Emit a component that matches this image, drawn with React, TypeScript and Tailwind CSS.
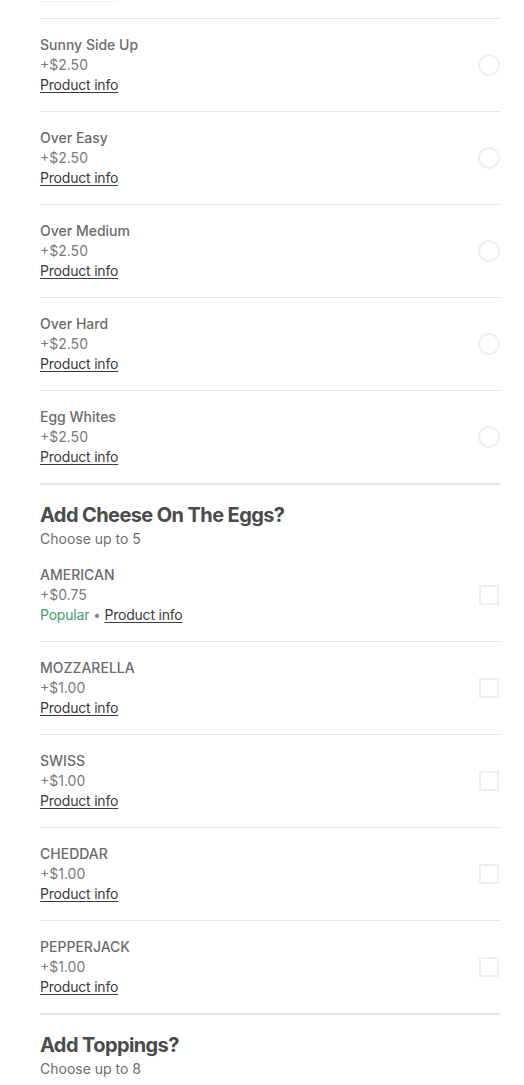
type Option = {
  name: string;
  price: string;
  popular?: boolean;
};

const eggs: Option[] = [
  { name: 'Sunny Side Up', price: '+$2.50' },
  { name: 'Over Easy', price: '+$2.50' },
  { name: 'Over Medium', price: '+$2.50' },
  { name: 'Over Hard', price: '+$2.50' },
  { name: 'Egg Whites', price: '+$2.50' },
];

const cheeses: Option[] = [
  { name: 'AMERICAN', price: '+$0.75', popular: true },
  { name: 'MOZZARELLA', price: '+$1.00' },
  { name: 'SWISS', price: '+$1.00' },
  { name: 'CHEDDAR', price: '+$1.00' },
  { name: 'PEPPERJACK', price: '+$1.00' },
];

const OptionRow = ({
  item,
  kind,
  first,
}: {
  item: Option;
  kind: 'radio' | 'check';
  first?: boolean;
}) => (
  <div
    className={`flex items-center justify-between py-4 ${first ? '' : 'border-t border-[#e8e8e8]'}`}
  >
    <div className="text-[14px] leading-[20px]">
      <div className="font-medium text-[#6b6b6b]">{item.name}</div>
      <div className="text-[#7a7a7a]">{item.price}</div>
      <div className="tracking-[-0.2px]">
        {item.popular && (
          <>
            <span className="text-[#4b9a70]">Popular</span>
            <span className="text-[#8a8a8a]"> • </span>
          </>
        )}
        <span className="text-[#3a3a3a] underline underline-offset-2">Product info</span>
      </div>
    </div>
    {kind === 'radio' ? (
      <div className="w-[22px] h-[22px] rounded-full border-2 border-[#efefef]" />
    ) : (
      <div className="w-[20px] h-[20px] border-2 border-[#efefef] mr-[1px]" />
    )}
  </div>
);

const SectionHeader = ({ title, sub }: { title: string; sub: string }) => (
  <div className="pt-4">
    <h2 className="text-[20px] leading-[28px] font-bold tracking-[-0.6px] text-[#4b4b4b]">{title}</h2>
    <p className="text-[14px] leading-[20px] text-[#6e6e6e]">{sub}</p>
  </div>
);

export default function App() {
  return (
    <div
      className="bg-white min-h-screen overflow-hidden"
      style={{ fontFamily: 'Inter, "Noto Sans", Arial, sans-serif' }}
    >
      <div className="ml-10 mr-6">
        <div className="h-[18px]">
          <div className="w-[78px] border-b border-[#f4f4f4] pt-[1px]" />
        </div>
        {eggs.map((e) => (
          <OptionRow key={e.name} item={e} kind="radio" />
        ))}
        <div className="border-t-2 border-[#e6e6e6]" />
        <SectionHeader title="Add Cheese On The Eggs?" sub="Choose up to 5" />
        {cheeses.map((c, i) => (
          <OptionRow key={c.name} item={c} kind="check" first={i === 0} />
        ))}
        <div className="border-t-2 border-[#e6e6e6]" />
        <SectionHeader title="Add Toppings?" sub="Choose up to 8" />
        <div className="h-10" />
      </div>
    </div>
  );
}
